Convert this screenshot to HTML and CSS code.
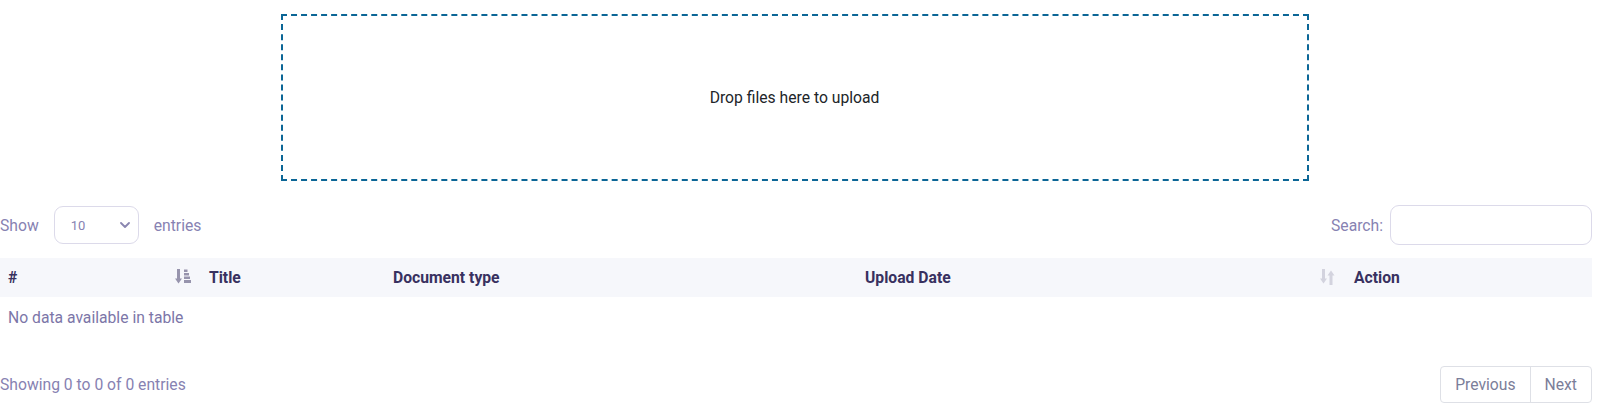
FILE: index.html
```html
<!DOCTYPE html>
<html>
<head>
<meta charset="utf-8">
<link rel="stylesheet" href="styles.css">
</head>
<body>
<div class="page">
  <div class="dropzone-wrap">
    <div class="dropzone">Drop files here to upload</div>
  </div>
  <div class="controls">
    <label class="length">Show
      <span class="select">10
        <svg class="chev" width="10" height="6" viewBox="0 0 10 6"><path d="M1 1l4 4 4-4" fill="none" stroke="#8a86b0" stroke-width="1.8" stroke-linecap="round" stroke-linejoin="round"/></svg>
      </span>
      entries</label>
    <label class="search">Search: <span class="input"></span></label>
  </div>
  <table class="table">
    <thead>
      <tr>
        <th class="c1"><span>#</span>
          <svg class="sort" width="16" height="16" viewBox="0 0 16 16"><path d="M3.5 0v11" stroke="#9794ad" stroke-width="3"/><path d="M0 9.5l3.5 5 3.5-5z" fill="#9794ad"/><rect x="9" y="0.5" width="3.5" height="2.5" fill="#9794ad"/><rect x="9" y="4" width="5" height="2.5" fill="#9794ad"/><rect x="9" y="7.5" width="6" height="2.5" fill="#9794ad"/><rect x="9" y="11" width="7" height="3" fill="#9794ad"/></svg>
        </th>
        <th class="c2">Title</th>
        <th class="c3">Document type</th>
        <th class="c4"><span>Upload Date</span>
          <svg class="sort" width="15" height="16" viewBox="0 0 15 16"><path d="M3.5 0v11" stroke="#d3d3de" stroke-width="3"/><path d="M0 9.5l3.5 5 3.5-5z" fill="#d3d3de"/><path d="M11 16V5" stroke="#d3d3de" stroke-width="3"/><path d="M7.5 6.5L11 1.5l3.5 5z" fill="#d3d3de"/></svg>
        </th>
        <th class="c5">Action</th>
      </tr>
    </thead>
    <tbody>
      <tr><td colspan="5" class="empty">No data available in table</td></tr>
    </tbody>
  </table>
  <div class="footer">
    <div class="info">Showing 0 to 0 of 0 entries</div>
    <div class="pager"><span class="pbtn">Previous</span><span class="pbtn">Next</span></div>
  </div>
</div>
</body>
</html>
```
FILE: styles.css
```css
html, body { margin: 0; padding: 0; background: #fff; }
body { font-family: Roboto, "Noto Sans", sans-serif; font-size: 15.7px; color: #212529; }
.page { width: 1592px; }
.dropzone-wrap { display: flex; justify-content: center; padding-top: 14px; }
.dropzone {
  box-sizing: border-box;
  width: 1028px; height: 167px;
  margin-left: -3px;
  border: 2px dashed #0b6696;
  display: flex; align-items: center; justify-content: center;
  color: #212529; font-size: 15.7px;
}
.controls { display: flex; justify-content: space-between; align-items: center; margin-top: 24px; height: 40px; }
.length { display: flex; align-items: center; color: #8782b2; }
.select {
  box-sizing: border-box; width: 85px; height: 38px;
  margin: 0 15px 0 15px;
  border: 1px solid #dcdaea; border-radius: 9px;
  display: flex; align-items: center; justify-content: space-between;
  padding: 0 8px 0 16px; font-size: 13px; color: #8782b2;
}
.search { display: flex; align-items: center; color: #8782b2; }
.input {
  box-sizing: border-box; width: 202px; height: 40px; margin-left: 7px;
  border: 1px solid #dcdaea; border-radius: 9px; display: block;
}
.table { width: 100%; border-collapse: collapse; margin-top: 13px; }
.table th {
  background: #f6f7fb; height: 39px; padding: 0 8px; text-align: left;
  font-weight: 700; color: #383160; white-space: nowrap;
}
.table th.c1 { width: 184px; }
.table th.c2 { width: 167px; padding-left: 9px; }
.table th.c3 { width: 455px; padding-left: 9px; }
.table th.c4 { width: 472px; padding-left: 9px; }
.table th.c5 { padding-left: 9px; }
.c1, .c4 { position: relative; }
.sort { position: absolute; top: 11px; }
.c1 .sort { right: 9px; }
.c4 .sort { right: 10px; }
.empty { height: 40px; padding: 0 8px; color: #7c76a8; }
.footer { display: flex; justify-content: space-between; align-items: center; margin-top: 29px; }
.info { color: #8782b2; }
.pager { display: flex; border: 1px solid #dee0e6; border-radius: 4px; height: 37px; box-sizing: border-box; }
.pbtn { display: flex; align-items: center; padding: 0 14px; color: #7b7e99; }
.pbtn + .pbtn { border-left: 1px solid #dee0e6; }
```
